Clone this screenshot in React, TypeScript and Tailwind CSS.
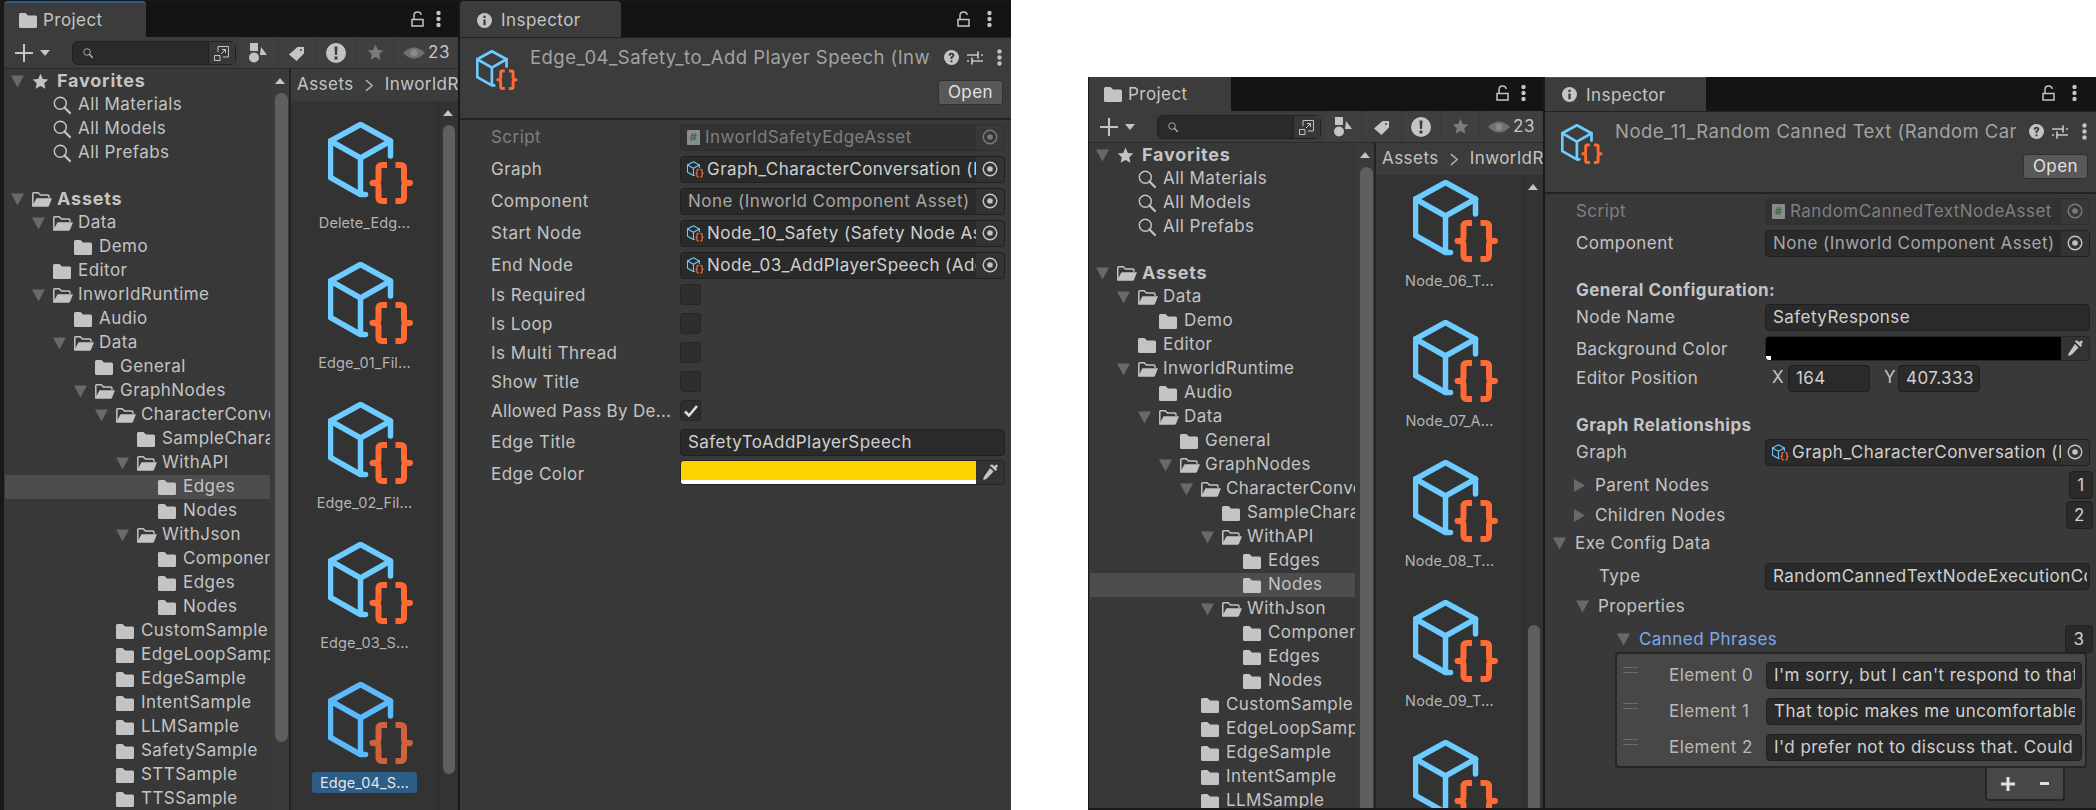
import type { ReactNode } from "react";

function AssetIcon({ className, dim }: { className: string; dim?: boolean }) {
  return (
    <svg viewBox="0 0 86 84" fill="none" className={className}>
      <g stroke={dim ? "#5cb9fa" : "#6dcbff"} strokeWidth="5.500" strokeLinejoin="round" strokeLinecap="round">
        <path d="M62.500 34V19L32.500 2.500 2.500 19v36.500l30 17h5" />
        <path d="M2.500 19l30 17 30-17M32.500 36v36" />
      </g>
      <g stroke={dim ? "#d0623a" : "#ff6a35"} strokeWidth="6" strokeLinejoin="round">
        <path d="M59 43h-5q-3.500 0-3.500 3.500V57q0 3.500-3 3.700l-3 .3 3 .3q3 .2 3 3.700v10.500q0 3.500 3.500 3.500h5" />
        <path d="M67.500 43h5q3.500 0 3.500 3.500V57q0 3.500 3 3.700l3 .3-3 .3q-3 .2-3 3.700v10.500q0 3.500-3.500 3.500h-5" />
      </g>
    </svg>
  );
}

function Triangle({ open = true, className = "" }: { open?: boolean; className?: string }) {
  return (
    <svg viewBox="0 0 13 13" className={`h-[13px] w-[13px] shrink-0 fill-[#696969] ${className}`}>
      {open ? <path d="M0 .5h13L6.500 12.500z" /> : <path d="M1 0l11 6.500L1 13z" />}
    </svg>
  );
}

function ClosedFolder({ className = "" }: { className?: string }) {
  return (
    <svg viewBox="0 0 18 15" className={`h-[15px] w-[18px] shrink-0 fill-[#c4c4c4] ${className}`}>
      <path d="M1.500 0h5l2.500 2.500h7.500q1.500 0 1.500 1.500v9.500q0 1.500-1.500 1.500h-15Q0 15 0 13.500v-12Q0 0 1.500 0z" />
    </svg>
  );
}

function OpenFolder() {
  return (
    <svg viewBox="0 0 20 15" className="h-[15px] w-5 shrink-0">
      <path d="M.8 14V1.800Q.8.800 1.800.800h4.400l2.300 2.300h7q1.500 0 1.500 1.200v1.500" fill="none" stroke="#c4c4c4" strokeWidth="1.500" />
      <path d="M4.500 6.200H20l-3 7.600q-.4 1-1.500 1H0z" fill="#c4c4c4" />
    </svg>
  );
}

function Star({ className }: { className: string }) {
  return (
    <svg viewBox="0 0 24 24" className={className}>
      <path d="M12 1l3.300 7.300 7.700.9-5.700 5.300 1.600 7.900L12 18.400l-6.900 4 1.600-7.900L1 9.200l7.700-.9z" />
    </svg>
  );
}

function Magnifier({ className }: { className: string }) {
  return (
    <svg viewBox="0 0 18 18" fill="none" stroke="#c4c4c4" className={className}>
      <circle cx="7.300" cy="7.300" r="6" strokeWidth="1.400" />
      <path d="M11.500 11.500l5.500 5.500" strokeWidth="2.200" strokeLinecap="round" />
    </svg>
  );
}

function Lock() {
  return (
    <svg viewBox="0 0 13 16" fill="none" stroke="#c4c4c4" strokeWidth="1.500" className="h-4 w-[13px]">
      <path d="M1 8.500h11v6.500H1zM3 8V4.500Q3 1 6.500 1T10 4" />
    </svg>
  );
}

function Dots({ className = "" }: { className?: string }) {
  return (
    <svg viewBox="0 0 5 17" className={`h-[17px] w-[5px] fill-[#c4c4c4] ${className}`}>
      <circle cx="2.500" cy="2.500" r="2.200" />
      <circle cx="2.500" cy="8.500" r="2.200" />
      <circle cx="2.500" cy="14.500" r="2.200" />
    </svg>
  );
}

function Target({ dim }: { dim?: boolean }) {
  return (
    <svg viewBox="0 0 16 16" fill="none" className="h-4 w-4" stroke={dim ? "#7a7a7a" : "#c4c4c4"}>
      <circle cx="8" cy="8" r="6.800" strokeWidth="1.400" />
      <circle cx="8" cy="8" r="2.800" fill={dim ? "#7a7a7a" : "#c4c4c4"} stroke="none" />
    </svg>
  );
}

function Pipette() {
  return (
    <svg viewBox="0 0 16 18" className="h-[18px] w-4 fill-[#c4c4c4]">
      <path d="M10.500 1.500l1.700 1.700 1.300-1.300q1-.7 1.800.1t.1 1.800l-1.300 1.300 1.200 1.300-1.800 1.700-6-6z" />
      <path d="M8 5l3.500 3.500-6.500 7-3 1.500-1-1 1.500-3z" />
    </svg>
  );
}

function Tab({ kind, active }: { kind: "project" | "inspector"; active?: boolean }) {
  const project = kind === "project";
  return (
    <div
      className={`flex h-full items-center rounded-t-[4px] bg-[#3c3c3c] ${project ? "w-[142px] gap-[6px] pl-[15px]" : "w-[161px] gap-[9px] pl-[17px]"} ${
        active ? (project ? "border-t-2 border-[#2c5d87]" : "border-t-[3px] border-[#2c5d87]") : "pt-[2px]"
      }`}
    >
      {project ? (
        <ClosedFolder />
      ) : (
        <svg viewBox="0 0 16 16" className="h-[15px] w-[15px]">
          <circle cx="8" cy="8" r="8" fill="#c4c4c4" />
          <path d="M6.800 3h2.400v2.300H6.800zM6.800 6.800h2.400V13H6.800z" fill="#3c3c3c" />
        </svg>
      )}
      <span className="translate-y-px text-[#c4c4c4]">{project ? "Project" : "Inspector"}</span>
    </div>
  );
}

const TREE: [number, string, string][] = [
  [0, "star", "Favorites"],
  [1, "search", "All Materials"],
  [1, "search", "All Models"],
  [1, "search", "All Prefabs"],
  [-1, "gap", ""],
  [0, "open", "Assets"],
  [1, "open", "Data"],
  [2, "closed", "Demo"],
  [1, "closed", "Editor"],
  [1, "open", "InworldRuntime"],
  [2, "closed", "Audio"],
  [2, "open", "Data"],
  [3, "closed", "General"],
  [3, "open", "GraphNodes"],
  [4, "open", "CharacterConversation"],
  [5, "closed", "SampleCharacter"],
  [5, "open", "WithAPI"],
  [6, "closed", "Edges"],
  [6, "closed", "Nodes"],
  [5, "open", "WithJson"],
  [6, "closed", "Components"],
  [6, "closed", "Edges"],
  [6, "closed", "Nodes"],
  [4, "closed", "CustomSample"],
  [4, "closed", "EdgeLoopSample"],
  [4, "closed", "EdgeSample"],
  [4, "closed", "IntentSample"],
  [4, "closed", "LLMSample"],
  [4, "closed", "SafetySample"],
  [4, "closed", "STTSample"],
  [4, "closed", "TTSSample"],
];

function TreeView({ selected }: { selected: number }) {
  return (
    <div className="w-[266px] shrink-0 overflow-hidden pl-px">
      {TREE.map(([depth, kind, name], i) => {
        if (kind === "gap") return <div key={i} className="h-[22px]" />;
        const top = depth === 0;
        return (
          <div
            key={i}
            className={`flex h-6 items-center whitespace-nowrap ${i === selected ? "bg-[#4d4d4d]" : ""}`}
            style={{ paddingLeft: 6 + depth * 21 }}
          >
            {kind === "open" || kind === "star" ? <Triangle /> : <span className="w-[13px] shrink-0" />}
            <span className="ml-2 flex w-[25px] shrink-0 items-center">
              {kind === "star" && <Star className="h-[17px] w-[17px] fill-[#c4c4c4]" />}
              {kind === "search" && <Magnifier className="h-[18px] w-[18px]" />}
              {kind === "open" && <OpenFolder />}
              {kind === "closed" && <ClosedFolder />}
            </span>
            <span className={top ? "-translate-y-px text-[18px] font-bold tracking-[0.8px] text-[#c4c4c4]" : "text-[#c4c4c4]"}>{name}</span>
          </div>
        );
      })}
    </div>
  );
}

function ScrollTrack({ thumbTop, className = "" }: { thumbTop: number; className?: string }) {
  return (
    <div className={`relative w-[18px] shrink-0 bg-[#3a3a3a] ${className}`}>
      <svg viewBox="0 0 10 6" className="absolute left-[4px] top-[9px] h-[6px] w-[10px] fill-[#c4c4c4]">
        <path d="M5 0l5 6H0z" />
      </svg>
      <div className="absolute left-[4px] right-[1px] rounded-full bg-[#5f5f5f]" style={{ top: thumbTop, height: 649 }} />
    </div>
  );
}

function ToolButton({ children, wide }: { children: ReactNode; wide?: boolean }) {
  return (
    <div className={`flex h-full items-center justify-center bg-[#3f3f3f] ${wide ? "w-[61px] gap-[3px]" : "w-[36px]"}`}>{children}</div>
  );
}

function Toolbar() {
  return (
    <div className="flex h-[32px] items-center border-b border-[#2b2b2b] bg-[#3c3c3c] pl-[11px]">
      <svg viewBox="0 0 18 18" className="h-[18px] w-[18px] fill-[#c4c4c4]">
        <path d="M8 0h2v8h8v2h-8v8H8v-8H0V8h8z" />
      </svg>
      <svg viewBox="0 0 10 6" className="ml-[7px] h-[6px] w-[10px] fill-[#c4c4c4]">
        <path d="M0 0h10L5 6z" />
      </svg>
      <div className="ml-[22px] flex h-[24px] w-[164px] items-center rounded-[6px] border border-[#202020] bg-[#2a2a2a] pl-[10px]">
        <Magnifier className="h-[10px] w-[10px]" />
        <div className="ml-auto flex h-full w-[27px] items-center justify-center border-l border-[#202020] bg-[#383838]">
          <svg viewBox="0 0 16 16" fill="none" stroke="#c4c4c4" strokeWidth="1" className="h-4 w-4">
            <path d="M4 7V1.500h10.500V12H9M.5 10.500h5.500v5H.5zM7 9l4.500-4.500M8 4.500h3.500V8" />
          </svg>
        </div>
      </div>
      <div className="ml-[4px] flex h-full gap-[3px]">
        <ToolButton>
          <svg viewBox="0 0 18 20" className="h-5 w-[18px] fill-[#c4c4c4]">
            <path d="M1 0h8v8H1z" />
            <circle cx="5" cy="14.500" r="5" />
            <path d="M12 4l6 8h-7z" />
          </svg>
        </ToolButton>
        <ToolButton>
          <svg viewBox="0 0 16 16" className="h-4 w-4 fill-[#c4c4c4]">
            <path d="M8.500 2H15v6.500L7.500 16 0 9.500zM12 4a1 1 0 100 2 1 1 0 000-2z" />
          </svg>
        </ToolButton>
        <ToolButton>
          <svg viewBox="0 0 20 20" className="h-5 w-5">
            <circle cx="10" cy="10" r="10" fill="#c4c4c4" />
            <path d="M8.500 3.500h3l-.5 8.500H9zM8.500 13.500h3v3h-3z" fill="#3c3c3c" />
          </svg>
        </ToolButton>
        <ToolButton>
          <Star className="h-[17px] w-[17px] fill-[#7b7b7b]" />
        </ToolButton>
        <ToolButton wide>
          <svg viewBox="0 0 22 14" className="h-[14px] w-[22px]">
            <path d="M0 7q11-11 22 0-11 11-22 0z" fill="#6f6f6f" />
            <circle cx="11" cy="7" r="3.500" fill="#8a8a8a" />
          </svg>
          <span className="text-[#c4c4c4]">23</span>
        </ToolButton>
      </div>
    </div>
  );
}

function GridItem({ label, selected }: { label: string; selected?: boolean }) {
  return (
    <div className="flex h-[140px] w-full flex-col items-center">
      <AssetIcon dim={selected} className="ml-[12px] h-[84px] w-[86px] shrink-0" />
      <div className={`mt-[6px] flex h-[21px] w-[105px] items-center justify-center rounded-[3px] text-[14.5px] tracking-[0.1px] ${selected ? "bg-[#2c5d87] text-[#e4e4e4]" : "text-[#b4b4b4]"}`}>
        {label}
      </div>
    </div>
  );
}

function ProjectPanel({ selected, labels, gridTop, gridThumb, active }: { selected: number; labels: string[]; gridTop: number; gridThumb: number; active?: boolean }) {
  return (
    <div className="flex h-full w-[454px] shrink-0 flex-col">
      <div className="h-[36px] shrink-0 bg-[#141414]">
        <div className="relative h-full">
          <Tab kind="project" active={active} />
          <div className="absolute right-[34px] top-1/2 -translate-y-1/2"><Lock /></div>
          <div className="absolute right-[17px] top-1/2 -translate-y-1/2"><Dots /></div>
        </div>
      </div>
      <Toolbar />
      <div className="flex min-h-0 flex-1 overflow-hidden bg-[#383838]">
        <TreeView selected={selected} />
        <ScrollTrack thumbTop={24} className="ml-[1px]" />
        <div className="w-[2px] shrink-0 bg-[#232323]" />
        <div className="flex min-w-0 flex-1 flex-col">
          <div className="flex h-[32px] shrink-0 items-center overflow-hidden whitespace-nowrap bg-[#3c3c3c] pl-[6px] text-[#c4c4c4]">
            <span>Assets</span>
            <svg viewBox="0 0 10 14" fill="none" stroke="#b0b0b0" strokeWidth="1.600" className="mx-[11px] h-[13px] w-[9px] shrink-0">
              <path d="M1 1l7 6-7 6" />
            </svg>
            <span>InworldRuntime</span>
          </div>
          <div className="flex min-h-0 flex-1 bg-[#333333]">
            <div className="min-w-0 flex-1 overflow-hidden" style={{ paddingTop: gridTop }}>
              {labels.map((l, i) => (
                <GridItem key={l} label={l} selected={selected === 17 && i === 4} />
              ))}
            </div>
            <ScrollTrack thumbTop={gridThumb} className="mr-[2px] border-l border-[#2d2d2d] !bg-[#333333]" />
          </div>
        </div>
      </div>
    </div>
  );
}

function Row({ label, children, className = "h-8", dim, labelClass = "" }: { label: string; children?: ReactNode; className?: string; dim?: boolean; labelClass?: string }) {
  return (
    <div className={`flex items-center ${className}`}>
      <div className={`w-[220px] shrink-0 whitespace-nowrap pl-[31px] pt-[2px] ${dim ? "text-[#7f7f7f]" : "text-[#c4c4c4]"} ${labelClass}`}>{label}</div>
      {children}
    </div>
  );
}

function ObjectField({ text, icon, dim, none }: { text: string; icon?: "asset" | "script"; dim?: boolean; none?: boolean }) {
  return (
    <div className={`flex h-[27px] w-[325px] items-center overflow-hidden rounded-[4px] border ${dim ? "border-[#2f2f2f] bg-[#323232]" : "border-[#202020] bg-[#2a2a2a]"}`}>
      <div className={`flex min-w-0 flex-1 items-center overflow-hidden whitespace-nowrap ${icon ? "pl-[6px]" : "pl-[7px]"}`}>
        {icon === "asset" && <AssetIcon className="mr-[3px] h-[17px] w-[17px] shrink-0" />}
        {icon === "script" && (
          <span className="mr-[5px] flex h-[15px] w-[13px] shrink-0 items-center justify-center rounded-[1px] bg-[#8c8c8c] text-[11px] font-bold leading-none text-[#3f6b48]">#</span>
        )}
        <span className={`pt-[2px] ${dim ? "text-[#7f7f7f]" : none ? "text-[#a6a6a6]" : "text-[#d0d0d0]"}`}>{text}</span>
      </div>
      <div className={`flex h-full w-[28px] shrink-0 items-center justify-center ${dim ? "bg-[#383838]" : "bg-[#333333]"}`}>
        <Target dim={dim} />
      </div>
    </div>
  );
}

function TextField({ text, className = "w-[325px] pr-[2px]" }: { text: string; className?: string }) {
  return (
    <div className={`flex h-[27px] items-center overflow-hidden whitespace-nowrap rounded-[4px] border border-[#202020] bg-[#2a2a2a] pl-[7px] text-[#d0d0d0] ${className}`}>
      <span className="block min-w-0 overflow-hidden pt-[2px]">{text}</span>
    </div>
  );
}

function ColorField({ color, alpha }: { color: string; alpha: string }) {
  return (
    <div className="flex h-[25px] w-[325px] items-center overflow-hidden rounded-[4px] border border-[#262626] bg-[#2a2a2a]">
      <div className="relative h-[23px] min-w-0 flex-1 bg-white" style={{ background: color }}>
        <div className={`absolute bottom-0 left-0 h-[4px] bg-white ${alpha}`} />
      </div>
      <div className="flex h-full w-[28px] shrink-0 items-center justify-center bg-[#333333]">
        <Pipette />
      </div>
    </div>
  );
}

function Checkbox({ checked }: { checked?: boolean }) {
  return (
    <div className="flex h-[21px] w-[21px] items-center justify-center rounded-[3px] border border-[#262626] bg-[#2e2e2e]">
      {checked && (
        <svg viewBox="0 0 14 12" fill="none" stroke="#e0e0e0" strokeWidth="2.500" className="h-3 w-[14px]">
          <path d="M1 6.500L5 10.500 13 1" />
        </svg>
      )}
    </div>
  );
}

function InspectorHeader({ title }: { title: string }) {
  return (
    <div className="relative flex h-[83px] shrink-0 border-b-2 border-t border-b-[#232323] border-t-[#232323] bg-[#3c3c3c] pl-[16px]">
      <AssetIcon className="mt-[12px] h-[41px] w-[42px] shrink-0" />
      <div className="ml-[12px] mt-[6px] h-[26px] w-[401px] overflow-hidden whitespace-nowrap text-[18.5px] tracking-[0.45px] text-[#a3a3a3]">{title}</div>
      <svg viewBox="0 0 16 16" className="absolute left-[484px] top-[12px] h-[15px] w-[15px]">
        <circle cx="8" cy="8" r="8" fill="#c4c4c4" />
        <path d="M5 6q0-3 3-3t3 2.700q0 1.800-2 2.600v1.200H7V7.200q2-.6 2-1.500 0-1-1-1t-1 1.300zM7 11h2v2H7z" fill="#3c3c3c" />
      </svg>
      <svg viewBox="0 0 16 16" fill="none" stroke="#c4c4c4" strokeWidth="1.700" className="absolute left-[507px] top-[12px] h-4 w-4">
        <path d="M0 5h11M14 5h2M11 1.500v7M0 11h2M5 11h11M5 7.500v7" />
      </svg>
      <Dots className="absolute left-[537px] top-[11px]" />
      <div className="absolute left-[478px] top-[42px] flex h-[25px] w-[65px] items-center justify-center rounded-[3px] border border-[#303030] bg-[#585858] text-[#e0e0e0]">
        Open
      </div>
    </div>
  );
}

function InspectorTop({ active }: { active?: boolean }) {
  return (
    <div className="relative h-[36px] shrink-0 bg-[#141414]">
      <Tab kind="inspector" active={active} />
      <div className="absolute right-[41px] top-1/2 -translate-y-1/2"><Lock /></div>
      <div className="absolute right-[19px] top-1/2 -translate-y-1/2"><Dots /></div>
    </div>
  );
}

function EdgeInspector() {
  return (
    <div className="flex h-full w-[551px] shrink-0 flex-col bg-[#393939]">
      <InspectorTop />
      <InspectorHeader title="Edge_04_Safety_to_Add Player Speech (Inworld Safety Edge Asset)" />
      <div className="pt-px">
        <Row label="Script" dim><ObjectField text="InworldSafetyEdgeAsset" icon="script" dim /></Row>
        <Row label="Graph"><ObjectField text="Graph_CharacterConversation (Inworld Graph Asset)" icon="asset" /></Row>
        <Row label="Component"><ObjectField text="None (Inworld Component Asset)" none /></Row>
        <Row label="Start Node"><ObjectField text="Node_10_Safety (Safety Node Asset)" icon="asset" /></Row>
        <Row label="End Node"><ObjectField text="Node_03_AddPlayerSpeech (Add Speech Node)" icon="asset" /></Row>
        <div className="-mt-px">
          <Row label="Is Required" className="h-[29px]"><Checkbox /></Row>
          <Row label="Is Loop" className="h-[29px]"><Checkbox /></Row>
          <Row label="Is Multi Thread" className="h-[29px]"><Checkbox /></Row>
          <Row label="Show Title" className="h-[29px]"><Checkbox /></Row>
          <Row label="Allowed Pass By De..." className="h-[29px]" labelClass="tracking-[0.3px]"><Checkbox checked /></Row>
        </div>
        <Row label="Edge Title" className="mt-px h-8"><TextField text="SafetyToAddPlayerSpeech" /></Row>
        <Row label="Edge Color" className="h-7" labelClass="translate-y-[2px]"><ColorField color="#ffd300" alpha="w-full" /></Row>
      </div>
    </div>
  );
}

function Count({ n, w = "w-[24px]" }: { n: number; w?: string }) {
  return (
    <div className={`absolute right-[3px] top-1/2 flex h-[28px] -translate-y-1/2 items-center justify-center rounded-[4px] border border-[#202020] bg-[#2a2a2a] pt-px text-[#d0d0d0] ${w}`}>{n}</div>
  );
}

function Fold({ label, open = false, left, className, blue }: { label: string; open?: boolean; left: number; className: string; blue?: boolean }) {
  return (
    <div className={`flex items-center ${className}`} style={{ paddingLeft: left }}>
      <Triangle open={open} />
      <span className={`ml-[9px] pt-[2px] ${blue ? "text-[#7ba9ee]" : "text-[#c4c4c4]"}`}>{label}</span>
    </div>
  );
}

function Element({ i, text }: { i: number; text: string }) {
  return (
    <div className="flex h-9 items-center">
      <div className="ml-[6px] flex w-[15px] shrink-0 -translate-y-[5px] flex-col gap-[4px]">
        <div className="h-px bg-[#6a6a6a]" />
        <div className="h-px bg-[#6a6a6a]" />
      </div>
      <div className="ml-[31px] w-[97px] shrink-0 pt-[2px] text-[#b8b8b8]">Element {i}</div>
      <TextField text={text} className="w-[316px] pr-[6px]" />
    </div>
  );
}

function NodeInspector() {
  return (
    <div className="flex h-full w-[551px] shrink-0 flex-col bg-[#393939]">
      <InspectorTop active />
      <InspectorHeader title="Node_11_Random Canned Text (Random Canned Text Node Asset)" />
      <div className="relative pt-px">
        <Row label="Script" dim><ObjectField text="RandomCannedTextNodeAsset" icon="script" dim /></Row>
        <Row label="Component"><ObjectField text="None (Inworld Component Asset)" none /></Row>
        <div className="mt-[19px] flex h-6 items-center pl-[31px] pt-[2px] font-bold text-[#c4c4c4]">General Configuration:</div>
        <Row label="Node Name" className="h-[30px]"><TextField text="SafetyResponse" /></Row>
        <Row label="Background Color" className="h-8" labelClass="translate-y-px"><ColorField color="#000000" alpha="w-[5px]" /></Row>
        <Row label="Editor Position" className="h-7">
          <div className="flex w-[325px] items-center text-[#c4c4c4]">
            <span className="ml-[7px] w-[16px]">X</span>
            <TextField text="164" className="w-[82px]" />
            <span className="ml-[14px] w-[14px]">Y</span>
            <TextField text="407.333" className="w-[82px]" />
          </div>
        </Row>
        <div className="mt-[21px] flex h-6 items-center pl-[31px] pt-[2px] font-bold text-[#c4c4c4]">Graph Relationships</div>
        <Row label="Graph" className="h-[30px]"><ObjectField text="Graph_CharacterConversation (Inworld Graph Asset)" icon="asset" /></Row>
        <div className="relative mt-[3px]">
          <Fold label="Parent Nodes" left={28} className="h-[30px]" />
          <div className="absolute right-0 top-[15px]"><Count n={1} /></div>
        </div>
        <div className="relative">
          <Fold label="Children Nodes" left={28} className="h-[30px]" />
          <div className="absolute right-0 top-[15px]"><Count n={2} w="w-[27px]" /></div>
        </div>
        <Fold label="Exe Config Data" open left={8} className="h-[26px]" />
        <div className="mt-[4px] flex h-8 items-center">
          <div className="w-[220px] shrink-0 pl-[54px] pt-[2px] text-[#c4c4c4]">Type</div>
          <TextField text="RandomCannedTextNodeExecutionConfig" />
        </div>
        <Fold label="Properties" open left={31} className="h-7" />
        <div className="relative mt-[5px]">
          <Fold label="Canned Phrases" open left={72} className="h-7" blue />
          <div className="absolute right-0 top-[14px]"><Count n={3} w="w-[28px]" /></div>
        </div>
        <div className="-mt-px ml-[70px] h-[116px] w-[472px] rounded-[4px] border-2 border-[#262626] bg-[#474747] pt-[3px]">
          <Element i={0} text="I'm sorry, but I can't respond to that" />
          <Element i={1} text="That topic makes me uncomfortable. Let's talk about something else." />
          <Element i={2} text="I'd prefer not to discuss that. Could we change the subject?" />
        </div>
        <div className="ml-[440px] flex h-[33px] w-[80px] items-center justify-center gap-[25px] rounded-b-[4px] border-2 border-t-0 border-[#262626] bg-[#474747]">
          <svg viewBox="0 0 14 14" className="h-[14px] w-[14px] fill-[#e0e0e0]"><path d="M5.500 0h3v5.500H14v3H8.500V14h-3V8.500H0v-3h5.500z" /></svg>
          <div className="h-[3px] w-[9px] bg-[#e0e0e0]" />
        </div>
      </div>
    </div>
  );
}

export default function App() {
  const edges = ["Delete_Edg...", "Edge_01_Fil...", "Edge_02_Fil...", "Edge_03_S...", "Edge_04_S..."];
  const nodes = ["Node_06_T...", "Node_07_A...", "Node_08_T...", "Node_09_T...", "Node_10_S..."];
  return (
    <div className="flex h-[810px] w-[2096px] overflow-hidden bg-white font-['Inter',sans-serif] text-[17px] tracking-[0.45px]">
      {/* left editor capture */}
      <div className="flex h-[810px] w-[1011px] shrink-0 bg-[#191919] pl-[4px] pt-px">
        <ProjectPanel selected={17} labels={edges} gridTop={21} gridThumb={24} active />
        <div className="w-[2px] shrink-0 bg-[#191919]" />
        <EdgeInspector />
      </div>
      {/* second capture, sits lower */}
      <div className="ml-[77px] mt-[77px] flex h-[733px] w-[1008px] shrink-0 overflow-hidden bg-[#191919] pl-px [&>*]:-mt-[2px]">
        <ProjectPanel selected={18} labels={nodes} gridTop={5} gridThumb={450} />
        <div className="w-[2px] shrink-0 bg-[#191919]" />
        <NodeInspector />
      </div>
    </div>
  );
}
